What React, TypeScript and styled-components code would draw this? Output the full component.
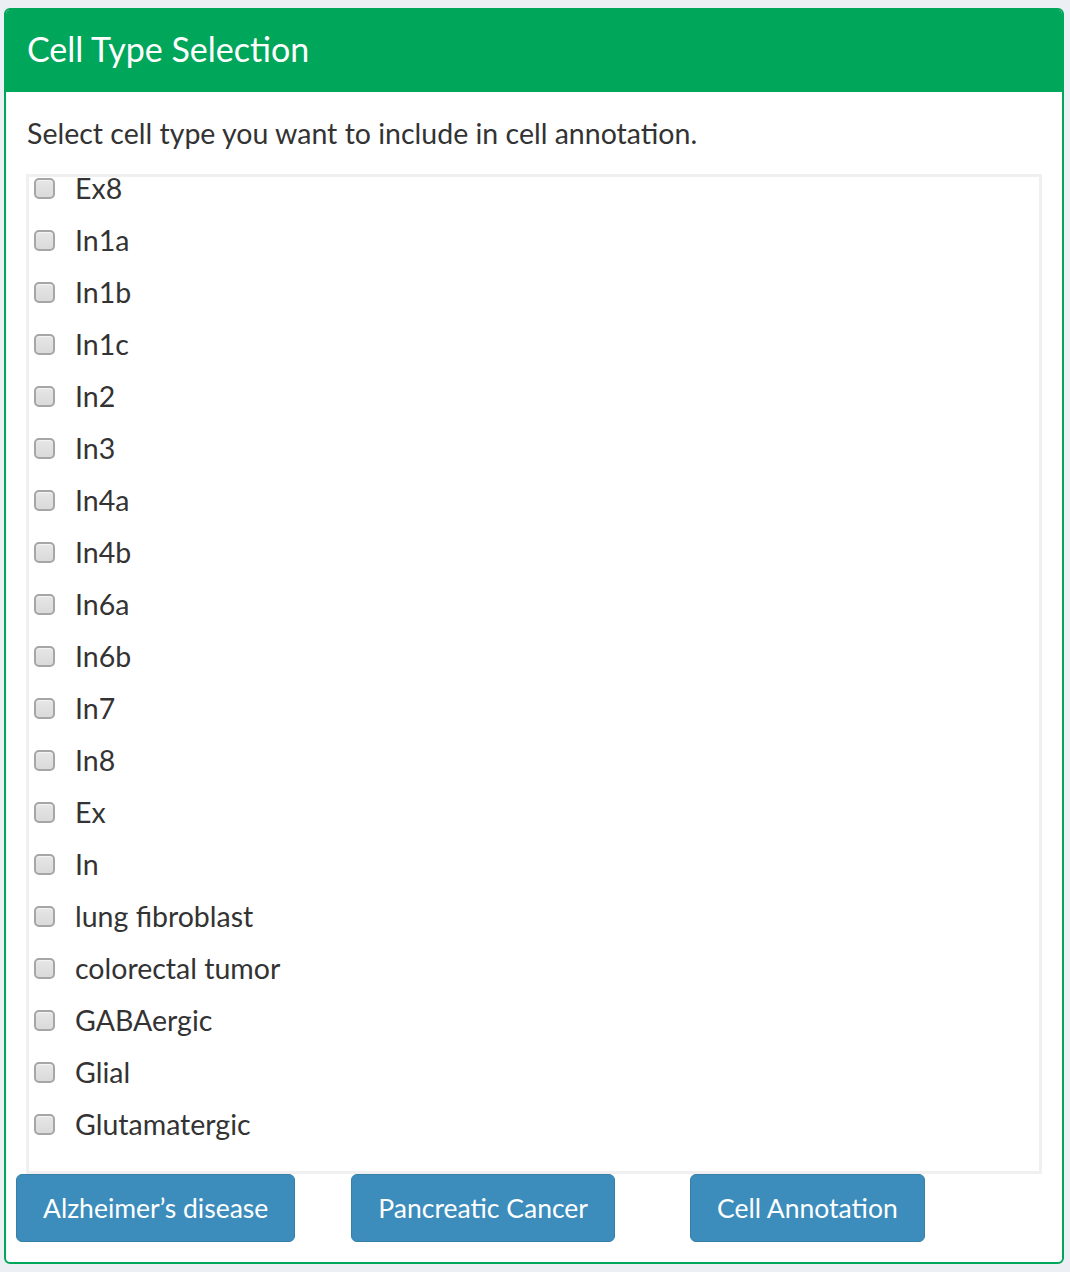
import React, { useLayoutEffect, useRef } from 'react'
import styled, { createGlobalStyle } from 'styled-components'

const GlobalStyle = createGlobalStyle`
  html, body {
    margin: 0;
    padding: 0;
    background: #ecf0f5;
  }
  body {
    font-family: Lato, "Liberation Sans", sans-serif;
    color: #333;
  }
  * {
    box-sizing: border-box;
  }
`

const Page = styled.div`
  padding: 8px 6px 9px 4px;
`

const Box = styled.section`
  background: #fff;
  border: 2px solid #00a65a;
  border-radius: 6px;
  overflow: hidden;
`

const Header = styled.header`
  display: flex;
  align-items: center;
  height: 82px;
  padding: 0 21px 4px;
  background: #00a65a;
`

const Title = styled.h3`
  margin: 0;
  font-size: 34px;
  font-weight: 400;
  color: #fff;
  line-height: 1;
`

const Body = styled.div`
  padding: 0 10px 20px;
`

const Intro = styled.p`
  margin: 0;
  padding: 22px 11px 22px;
  font-size: 28.5px;
  line-height: 38px;
`

const List = styled.div`
  height: 1000px;
  margin: 0 10px;
  border: 3px solid #f0f0f0;
  overflow-y: auto;
  scrollbar-width: none;
  &::-webkit-scrollbar {
    display: none;
  }
`

const Items = styled.div`
  display: flex;
  flex-direction: column;
  gap: 12px;
  padding: 10px 0 27px;
`

const Row = styled.label`
  display: flex;
  align-items: center;
  height: 40px;
  padding-left: 5px;
  font-size: 28.5px;
  cursor: pointer;
`

const Check = styled.span`
  flex: none;
  width: 21px;
  height: 21px;
  margin-right: 20px;
  border: 2px solid #a6a6a6;
  border-radius: 5px;
  background: linear-gradient(#e6e6e6, #dadada);
  box-shadow: inset 0 1px 1px rgba(255, 255, 255, 0.6);
`

const Actions = styled.div`
  display: flex;
  align-items: flex-start;
`

const Button = styled.button<{ $offset: number }>`
  height: 68px;
  margin-left: ${p => p.$offset}px;
  padding: 0 26px;
  border: 1px solid #367fa9;
  border-radius: 6px;
  background: #3c8dbc;
  color: #fff;
  font-family: Lato, "Liberation Sans", sans-serif;
  font-size: 26.5px;
  cursor: pointer;
`

const hidden = ['Astro', 'Endo', 'Ex1', 'Ex2', 'Ex3', 'Ex4', 'Ex5a', 'Ex5b', 'Ex6a', 'Ex6b']

const cellTypes = [
  ...hidden,
  'Ex8',
  'In1a',
  'In1b',
  'In1c',
  'In2',
  'In3',
  'In4a',
  'In4b',
  'In6a',
  'In6b',
  'In7',
  'In8',
  'Ex',
  'In',
  'lung fibroblast',
  'colorectal tumor',
  'GABAergic',
  'Glial',
  'Glutamatergic',
]

const buttons = [
  { label: 'Alzheimer’s disease', offset: 0 },
  { label: 'Pancreatic Cancer', offset: 56 },
  { label: 'Cell Annotation', offset: 75 },
]

export default function App() {
  const listRef = useRef<HTMLDivElement>(null)

  // the list is shown scrolled to its end
  useLayoutEffect(() => {
    if (listRef.current) listRef.current.scrollTop = listRef.current.scrollHeight
  }, [])

  return (
    <Page>
      <GlobalStyle />
      <Box>
        <Header>
          <Title>Cell Type Selection</Title>
        </Header>
        <Body>
          <Intro>Select cell type you want to include in cell annotation.</Intro>
          <List ref={listRef}>
            <Items>
              {cellTypes.map(name => (
                <Row key={name}>
                  <Check />
                  {name}
                </Row>
              ))}
            </Items>
          </List>
          <Actions>
            {buttons.map(b => (
              <Button key={b.label} $offset={b.offset}>
                {b.label}
              </Button>
            ))}
          </Actions>
        </Body>
      </Box>
    </Page>
  )
}
